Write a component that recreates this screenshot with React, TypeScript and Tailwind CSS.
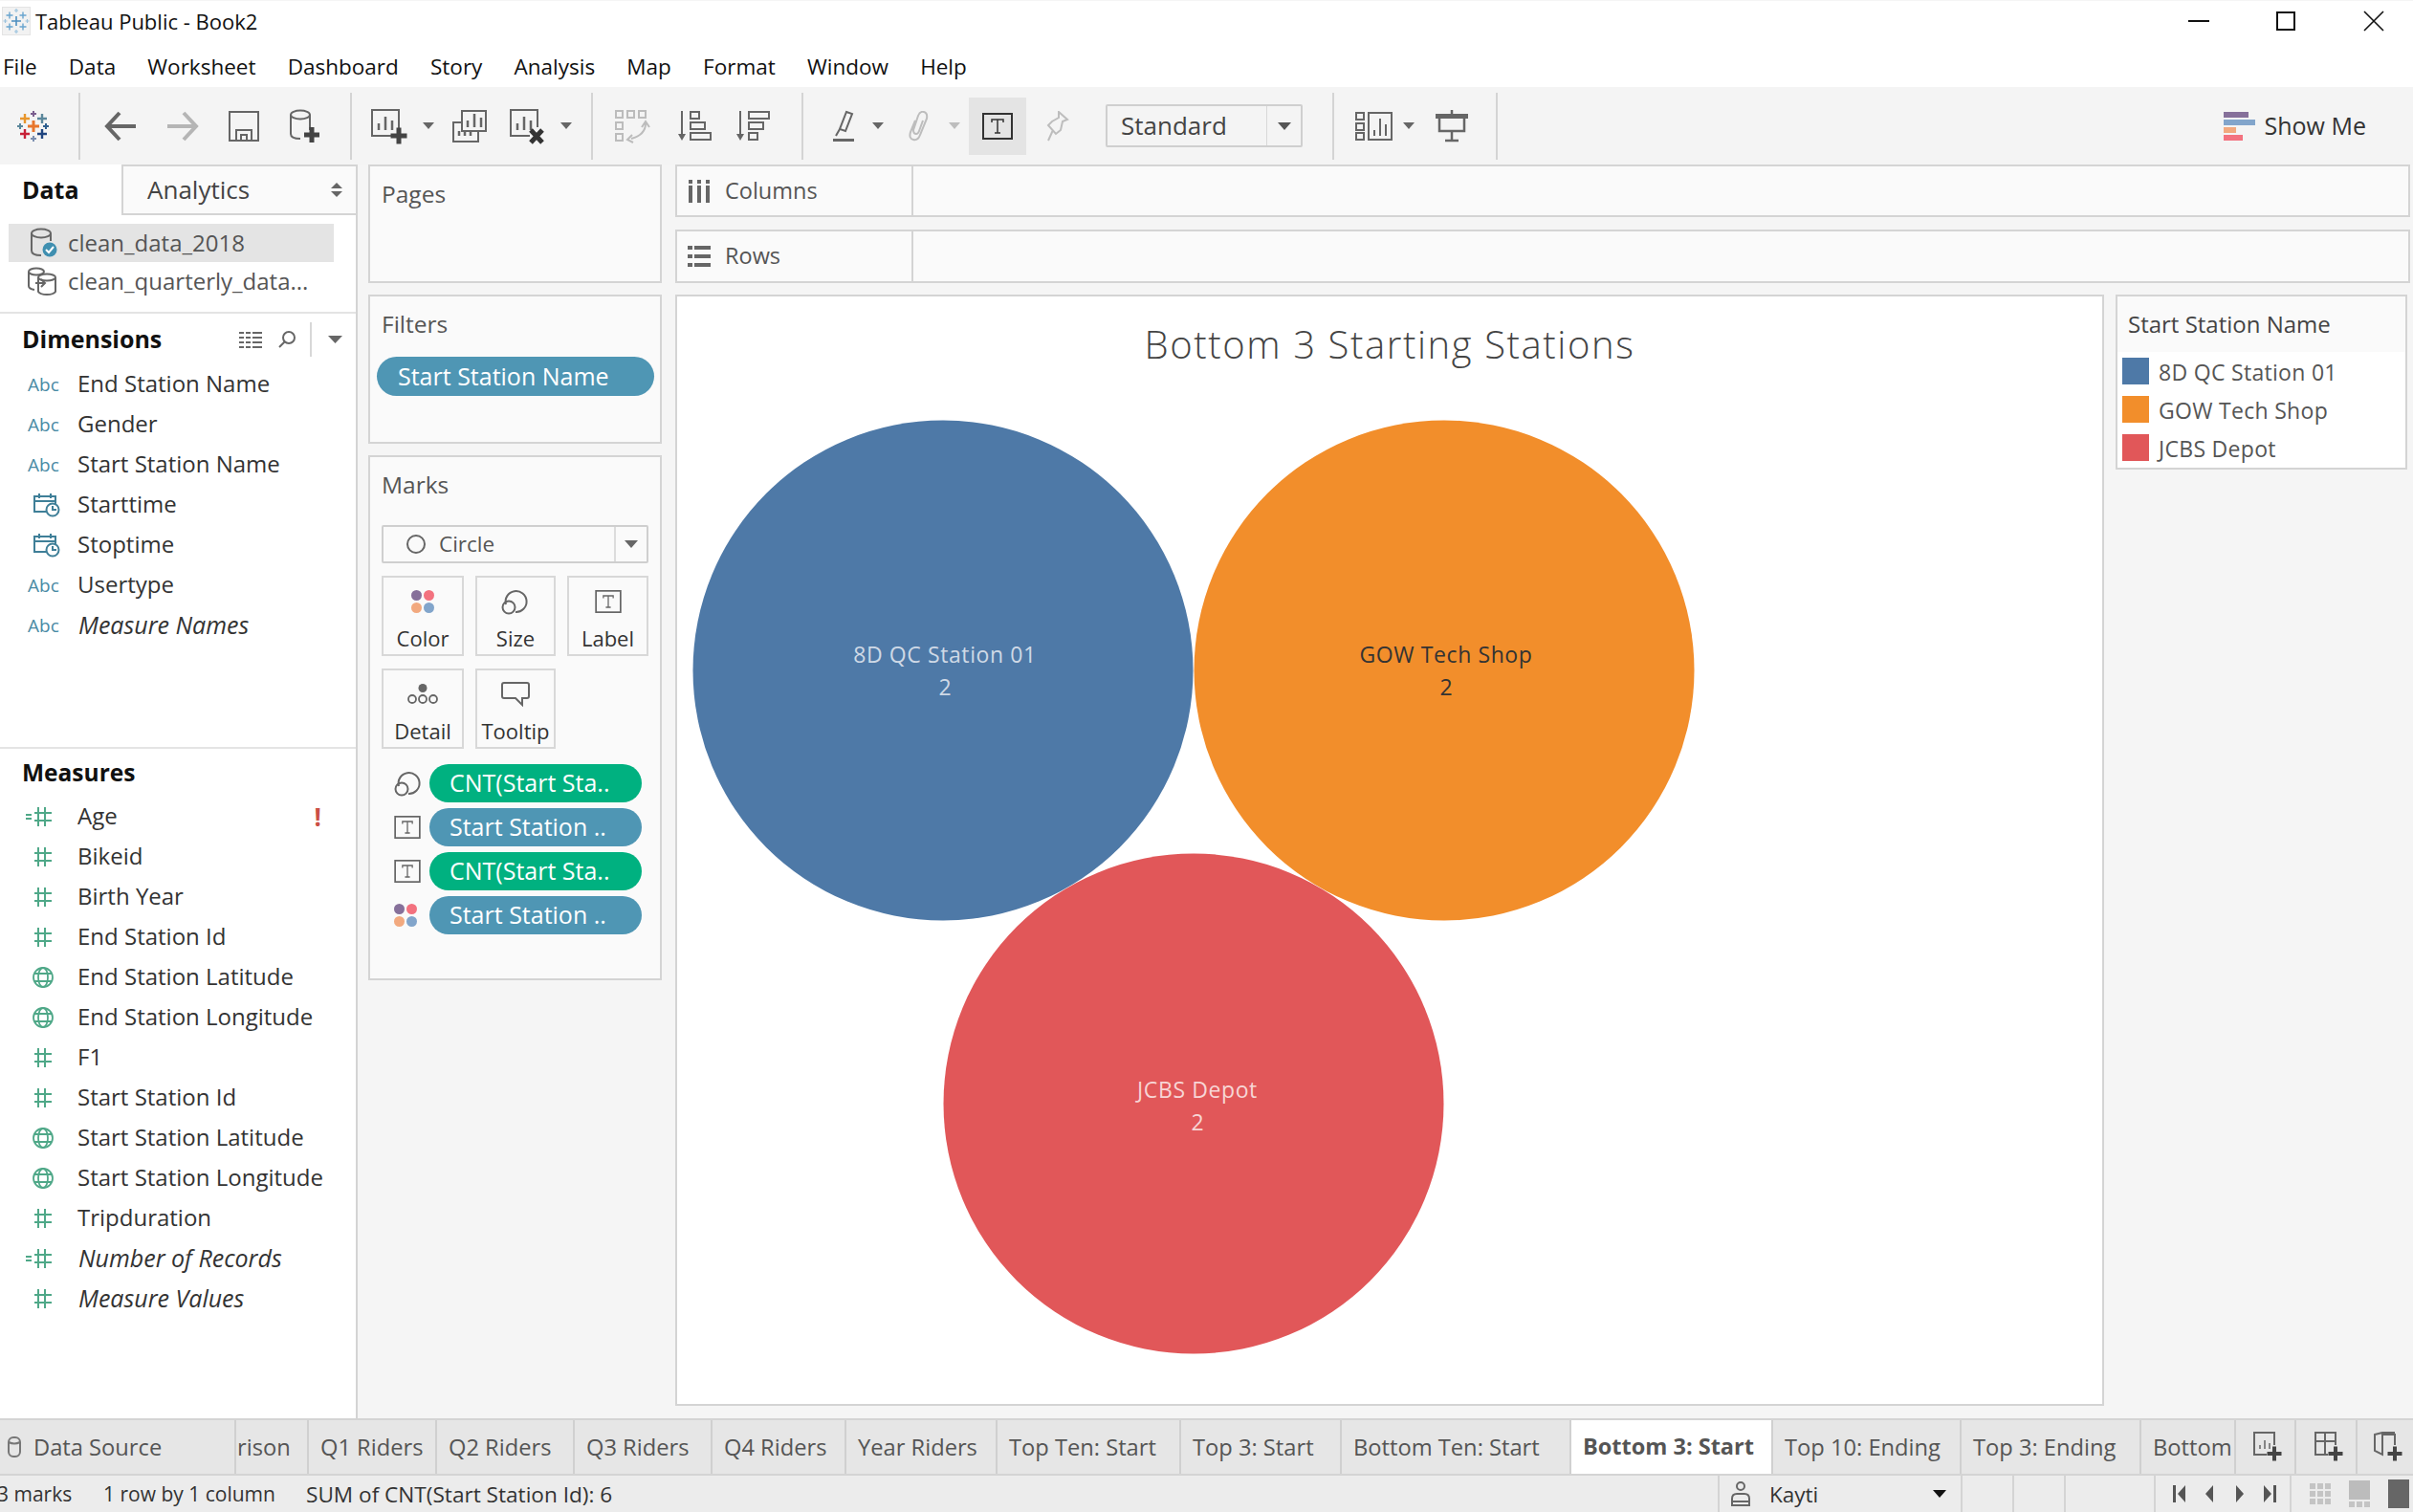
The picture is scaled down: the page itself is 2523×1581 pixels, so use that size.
import React from 'react';

const G = '#666666';

const Tri = ({ color = '#666', w = 12, h = 7 }: { color?: string; w?: number; h?: number }) => (
  <svg width={w} height={h} viewBox="0 0 12 7" preserveAspectRatio="none" className="shrink-0">
    <polygon points="0,0 12,0 6,7" fill={color} />
  </svg>
);

const Plus = ({ x, y, s = 16, w = 5, color = '#444' }: { x: number; y: number; s?: number; w?: number; color?: string }) => (
  <path d={`M${x} ${y - s / 2}V${y + s / 2}M${x - s / 2} ${y}H${x + s / 2}`} stroke={color} strokeWidth={w} fill="none" />
);

const Cross = ({ x, y, s, c, w = 2.4 }: { x: number; y: number; s: number; c: string; w?: number }) => (
  <path d={`M${x} ${y - s}V${y + s}M${x - s} ${y}H${x + s}`} stroke={c} strokeWidth={w} fill="none" />
);

const TableauLogo = () => (
  <svg width="36" height="34" viewBox="0 0 36 34">
    <Cross x={18} y={17} s={6} c="#e8762c" w={3} />
    <Cross x={9} y={9} s={5} c="#e8962c" />
    <Cross x={27} y={9} s={5} c="#5b879b" />
    <Cross x={18} y={4} s={3} c="#7b5f8f" w={2} />
    <Cross x={4} y={17} s={3} c="#5b879b" w={2} />
    <Cross x={31} y={17} s={3} c="#2f5f8f" w={2} />
    <Cross x={9} y={25} s={5} c="#c72037" />
    <Cross x={27} y={25} s={5} c="#1f447f" />
    <Cross x={18} y={30} s={3} c="#7b8fb0" w={2} />
  </svg>
);

const AppIcon = () => (
  <div className="w-[30px] h-[30px] bg-[#f2f2f2] border border-[#e4e4e4] shrink-0 ml-[2px]">
    <svg width="28" height="28" viewBox="0 0 28 28">
      <Cross x={14} y={14} s={5} c="#4e8fc0" w={1.6} />
      <Cross x={7} y={8} s={3.5} c="#6aa5cf" w={1.4} />
      <Cross x={21} y={8} s={3.5} c="#6aa5cf" w={1.4} />
      <Cross x={7} y={20} s={3.5} c="#6aa5cf" w={1.4} />
      <Cross x={21} y={20} s={3.5} c="#6aa5cf" w={1.4} />
      <Cross x={14} y={3} s={2} c="#9cc3de" w={1.2} />
      <Cross x={14} y={25} s={2} c="#9cc3de" w={1.2} />
      <Cross x={2.5} y={14} s={2} c="#9cc3de" w={1.2} />
      <Cross x={25.5} y={14} s={2} c="#9cc3de" w={1.2} />
    </svg>
  </div>
);

const Arrow = ({ flip, color }: { flip?: boolean; color: string }) => (
  <svg width="36" height="32" viewBox="0 0 36 32" className={flip ? '-scale-x-100' : ''}>
    <path d="M34 16H5M17 2L4 16L17 30" stroke={color} strokeWidth="4" fill="none" />
  </svg>
);

const SaveIcon = () => (
  <svg width="32" height="32" viewBox="0 0 32 32" fill="none" stroke={G} strokeWidth="2">
    <rect x="1" y="1" width="30" height="30" />
    <path d="M8 31V20H24V31M13 31V25H19V31" />
  </svg>
);

const AddDataIcon = () => (
  <svg width="34" height="36" viewBox="0 0 34 36" fill="none" stroke={G} strokeWidth="2">
    <ellipse cx="12" cy="6" rx="10" ry="4.5" />
    <path d="M2 6V26Q2 31 12 31M22 6V22" />
    <Plus x={24} y={27} />
  </svg>
);

const Bars = ({ x, y, s = 1 }: { x: number; y: number; s?: number }) => (
  <path
    d={`M${x} ${y}v${-7 * s}M${x + 7 * s} ${y}v${-14 * s}M${x + 14 * s} ${y}v${-10 * s}`}
    stroke={G}
    strokeWidth="2.5"
    fill="none"
  />
);

const NewSheetIcon = () => (
  <svg width="40" height="38" viewBox="0 0 40 38" fill="none" stroke={G} strokeWidth="2">
    <path d="M24 29H2V2H30V22" />
    <Bars x={9} y={23} />
    <Plus x={30} y={29} s={17} />
  </svg>
);

const DuplicateIcon = () => (
  <svg width="38" height="36" viewBox="0 0 38 36" fill="none" stroke={G} strokeWidth="2">
    <rect x="11" y="2" width="25" height="21" />
    <Bars x={17} y={19} />
    <path d="M11 14H2V34H28V23" />
    <path d="M8 28v-5M14 28v-5M20 28v-5" strokeWidth="2.5" />
  </svg>
);

const ClearIcon = () => (
  <svg width="38" height="38" viewBox="0 0 38 38" fill="none" stroke={G} strokeWidth="2">
    <path d="M22 29H2V2H30V20" />
    <Bars x={9} y={23} />
    <path d="M23 23L35 36M35 23L23 36" stroke="#333" strokeWidth="5" />
  </svg>
);

const SwapIcon = () => (
  <svg width="38" height="36" viewBox="0 0 38 36" fill="none" stroke="#bcbcbc" strokeWidth="2">
    <rect x="2" y="2" width="7" height="7" />
    <rect x="14" y="2" width="7" height="7" />
    <rect x="26" y="2" width="7" height="7" />
    <rect x="2" y="14" width="7" height="7" />
    <rect x="2" y="26" width="7" height="7" />
    <path d="M33 15Q33 27 18 31M29 19L33 13L37 19M19 27L14 32L20 35" />
  </svg>
);

const SortIcon = ({ asc }: { asc?: boolean }) => (
  <svg width="36" height="34" viewBox="0 0 36 34" fill="none" stroke={G} strokeWidth="2">
    <path d="M4 1V26" />
    <polygon points="0,25 8,25 4,32" fill={G} stroke="none" />
    {asc ? (
      <>
        <rect x="13" y="2" width="9" height="7" />
        <rect x="13" y="13" width="15" height="7" />
        <rect x="13" y="24" width="21" height="7" />
      </>
    ) : (
      <>
        <rect x="13" y="2" width="21" height="7" />
        <rect x="13" y="13" width="15" height="7" />
        <rect x="13" y="24" width="9" height="7" />
      </>
    )}
  </svg>
);

const HighlightIcon = () => (
  <svg width="24" height="34" viewBox="0 0 24 34" fill="none" stroke={G} strokeWidth="2">
    <path d="M15 2L21 4L14 22L8 20ZM8 20L4 27" />
    <rect x="1" y="30" width="22" height="3" fill={G} stroke="none" />
  </svg>
);

const ClipIcon = () => (
  <svg width="24" height="32" viewBox="0 0 24 32" fill="none" stroke="#bdbdbd" strokeWidth="2">
    <path d="M9 10L4 22Q2 29 7 30Q12 31 14 25L21 8Q22 2 18 1Q14 0 12 5L7 20Q7 24 10 24Q12 24 13 21L17 10" />
  </svg>
);

const TIcon = ({ w = 32, h = 28, color = '#333', sw = 2 }: { w?: number; h?: number; color?: string; sw?: number }) => (
  <svg width={w} height={h} viewBox="0 0 32 28" fill="none">
    <rect x="1" y="1" width="30" height="26" stroke={color} strokeWidth={sw} />
    <path d="M10 10V7H22V10M16 7V21M13 21H19" stroke={color} strokeWidth="1.5" />
  </svg>
);

const PinIcon = () => (
  <svg width="24" height="32" viewBox="0 0 24 32" fill="none" stroke="#bdbdbd" strokeWidth="2">
    <path d="M13 1L22 9L17 11L15 20L10 24L2 15L6 11L13 7ZM7 20L2 31" />
  </svg>
);

const CardsIcon = () => (
  <svg width="40" height="30" viewBox="0 0 40 30" fill="none" stroke={G} strokeWidth="2">
    <rect x="1" y="1" width="8" height="7" />
    <rect x="1" y="12" width="8" height="7" />
    <rect x="1" y="22" width="8" height="7" />
    <rect x="14" y="1" width="24" height="28" />
    <path d="M20 25v-6M26 25v-18M32 25v-12" />
  </svg>
);

const PresentIcon = () => (
  <svg width="34" height="34" viewBox="0 0 34 34" fill="none" stroke={G} strokeWidth="2.5">
    <path d="M17 0V4" />
    <rect x="0" y="4" width="34" height="5" fill={G} stroke="none" />
    <path d="M4 9V22H30V9M17 22V32M10 32H24" />
  </svg>
);

const ShowMeIcon = () => (
  <div className="flex flex-col gap-[2px] w-[33px]">
    <div className="h-[6px] w-[26px] bg-[#86709a]" />
    <div className="h-[6px] w-[33px] bg-[#82a5cb]" />
    <div className="h-[6px] w-[13px] bg-[#f2a97f]" />
    <div className="h-[6px] w-[20px] bg-[#f3727f]" />
  </div>
);

const Sep = () => <div className="w-[2px] h-[70px] bg-[#d4d4d4] shrink-0" />;

const Slot = ({ w = 40, ml = 0, children }: { w?: number; ml?: number; children: React.ReactNode }) => (
  <div className="flex items-center justify-center shrink-0" style={{ width: w, marginLeft: ml }}>
    {children}
  </div>
);

const Toolbar = () => (
  <div className="h-[81px] bg-[#f4f4f4] flex items-center shrink-0">
    <Slot w={70}><TableauLogo /></Slot>
    <div className="ml-[12px]"><Sep /></div>
    <Slot ml={22}><Arrow color="#666" /></Slot>
    <Slot ml={25}><Arrow flip color="#b5b5b5" /></Slot>
    <Slot ml={24}><SaveIcon /></Slot>
    <Slot ml={24}><AddDataIcon /></Slot>
    <div className="ml-[27px]"><Sep /></div>
    <Slot ml={19}><NewSheetIcon /></Slot>
    <Slot w={14} ml={14}><Tri /></Slot>
    <Slot ml={16}><DuplicateIcon /></Slot>
    <Slot ml={20}><ClearIcon /></Slot>
    <Slot w={14} ml={14}><Tri /></Slot>
    <div className="ml-[19px]"><Sep /></div>
    <Slot ml={21}><SwapIcon /></Slot>
    <Slot ml={26}><SortIcon asc /></Slot>
    <Slot ml={21}><SortIcon /></Slot>
    <div className="ml-[30px]"><Sep /></div>
    <Slot ml={22}><HighlightIcon /></Slot>
    <Slot w={14} ml={9}><Tri /></Slot>
    <Slot ml={15}><ClipIcon /></Slot>
    <Slot w={14} ml={11}><Tri color="#bdbdbd" /></Slot>
    <div className="ml-[8px] w-[60px] h-[60px] bg-[#e4e4e4] flex items-center justify-center shrink-0">
      <TIcon />
    </div>
    <Slot ml={13}><PinIcon /></Slot>
    <div className="ml-[30px] w-[206px] h-[45px] border-2 border-[#cfcfcf] rounded-[2px] flex items-center shrink-0">
      <span className="pl-[14px] flex-1 text-[26px] text-[#444]">Standard</span>
      <div className="w-[36px] h-full border-l border-[#d8d8d8] flex items-center justify-center">
        <Tri w={14} h={8} color="#555" />
      </div>
    </div>
    <div className="ml-[31px]"><Sep /></div>
    <Slot ml={22}><CardsIcon /></Slot>
    <Slot w={14} ml={9}><Tri /></Slot>
    <Slot ml={18}><PresentIcon /></Slot>
    <div className="ml-[26px]"><Sep /></div>
    <div className="ml-auto mr-[49px] flex items-center gap-[10px]">
      <ShowMeIcon />
      <span className="text-[25px] text-[#333]">Show Me</span>
    </div>
  </div>
);

const CalendarIcon = () => (
  <svg width="30" height="26" viewBox="0 0 30 26" fill="none" stroke="#3f7f98" strokeWidth="2">
    <path d="M14 20H2V4H24V12M2 9H24M7 1V6M19 1V6" />
    <circle cx="21" cy="18" r="6.5" fill="#fff" />
    <path d="M21 14V18H25" />
  </svg>
);

const NumIcon = ({ eq }: { eq?: boolean }) => (
  <svg width="30" height="20" viewBox="0 0 30 20" fill="none" stroke="#4fa888" strokeWidth="2" className="ml-[-2px]">
    {eq && <path d="M0 8H6M0 12H6" />}
    <path d="M13 0V20M20 0V20M9 6H27M9 14H27" />
  </svg>
);

const GlobeIcon = () => (
  <svg width="22" height="22" viewBox="0 0 22 22" fill="none" stroke="#4fa888" strokeWidth="1.8">
    <circle cx="11" cy="11" r="10" />
    <ellipse cx="11" cy="11" rx="5" ry="10" />
    <path d="M2 7H20M2 15H20" />
  </svg>
);

const AbcIcon = () => <span className="text-[19px] leading-none text-[#4a8ba5]">Abc</span>;

type FieldKind = 'abc' | 'date' | 'num' | 'eq' | 'geo';

const FieldIcon = ({ kind }: { kind: FieldKind }) => {
  if (kind === 'abc') return <AbcIcon />;
  if (kind === 'date') return <div className="pl-[5px]"><CalendarIcon /></div>;
  if (kind === 'geo') return <div className="pl-[5px]"><GlobeIcon /></div>;
  return <NumIcon eq={kind === 'eq'} />;
};

const Field = ({ kind, name, italic, warn }: { kind: FieldKind; name: string; italic?: boolean; warn?: boolean }) => (
  <div className="h-[42px] flex items-center">
    <div className="w-[81px] pl-[29px] flex items-center shrink-0">
      <FieldIcon kind={kind} />
    </div>
    <span className={`leading-none text-[#333] whitespace-nowrap mt-[-2px] ${italic ? 'italic text-[25px] ml-[1px]' : 'text-[24px]'}`}>{name}</span>
    {warn && <span className="ml-auto mr-[36px] text-[26px] font-bold leading-none text-[#cb4f45]">!</span>}
  </div>
);

const dimensions: [FieldKind, string, boolean?][] = [
  ['abc', 'End Station Name'],
  ['abc', 'Gender'],
  ['abc', 'Start Station Name'],
  ['date', 'Starttime'],
  ['date', 'Stoptime'],
  ['abc', 'Usertype'],
  ['abc', 'Measure Names', true],
];

const measures: [FieldKind, string, boolean?][] = [
  ['eq', 'Age'],
  ['num', 'Bikeid'],
  ['num', 'Birth Year'],
  ['num', 'End Station Id'],
  ['geo', 'End Station Latitude'],
  ['geo', 'End Station Longitude'],
  ['num', 'F1'],
  ['num', 'Start Station Id'],
  ['geo', 'Start Station Latitude'],
  ['geo', 'Start Station Longitude'],
  ['num', 'Tripduration'],
  ['eq', 'Number of Records', true],
  ['num', 'Measure Values', true],
];

const DataPane = () => (
  <div className="w-[374px] shrink-0 bg-white border-r-2 border-[#d4d4d4] flex flex-col">
    <div className="h-[53px] flex shrink-0">
      <div className="w-[127px] pl-[23px] flex items-center text-[25px] font-bold text-[#111]">Data</div>
      <div className="flex-1 bg-[#fafafa] border-2 border-r-0 border-[#d4d4d4] pl-[25px] pr-[14px] flex items-center justify-between">
        <span className="text-[26px] text-[#444]">Analytics</span>
        <svg width="12" height="15" viewBox="0 0 12 15"><polygon points="6,0 12,6 0,6" fill="#666" /><polygon points="6,15 12,9 0,9" fill="#666" /></svg>
      </div>
    </div>
    <div className="mt-[9px] h-[40px] ml-[9px] w-[340px] bg-[#e4e4e4] flex items-center shrink-0">
      <svg width="30" height="32" viewBox="0 0 30 32" fill="none" stroke={G} strokeWidth="2" className="ml-[22px]">
        <ellipse cx="12" cy="6" rx="10" ry="4.5" />
        <path d="M2 6V24Q2 29 12 29M22 6V14" />
        <circle cx="21" cy="23" r="7.5" fill="#3f8fb0" stroke="none" />
        <path d="M17 23L20 26L25 20" stroke="#fff" />
      </svg>
      <span className="ml-[10px] text-[24px] text-[#555]">clean_data_2018</span>
    </div>
    <div className="h-[40px] flex items-center shrink-0">
      <svg width="32" height="30" viewBox="0 0 32 30" fill="none" stroke={G} strokeWidth="2" className="ml-[28px]">
        <ellipse cx="10" cy="5" rx="8" ry="3.5" />
        <path d="M2 5V20Q2 23 8 24" />
        <ellipse cx="21" cy="11" rx="9" ry="3.5" />
        <path d="M12 11V26Q14 29 21 29Q28 29 30 26V11M9 17H19M15 13L19 17L15 21" />
      </svg>
      <span className="ml-[11px] text-[24px] text-[#555] whitespace-nowrap">clean_quarterly_data...</span>
    </div>
    <div className="mt-[12px] h-[2px] bg-[#e4e4e4] shrink-0" />
    <div className="h-[53px] flex items-center pl-[23px] shrink-0">
      <span className="text-[25px] font-bold text-[#111]">Dimensions</span>
      <svg width="24" height="18" viewBox="0 0 24 18" stroke="#666" strokeWidth="2" className="ml-[auto]">
        <path d="M0 2h5M7 2h5M14 2h10M0 7h5M7 7h5M14 7h10M0 12h5M7 12h5M14 12h10M0 17h5M7 17h5M14 17h10" />
      </svg>
      <svg width="18" height="18" viewBox="0 0 18 18" fill="none" stroke="#666" strokeWidth="2" className="ml-[17px]">
        <circle cx="11" cy="7" r="6" />
        <path d="M7 11L1 17" />
      </svg>
      <div className="ml-[15px] w-[2px] h-[36px] bg-[#d8d8d8]" />
      <div className="ml-[17px] mr-[14px]"><Tri w={15} h={8} /></div>
    </div>
    <div className="flex flex-col shrink-0">
      {dimensions.map(([kind, name, italic]) => (
        <Field key={name} kind={kind} name={name} italic={italic} />
      ))}
    </div>
    <div className="mt-[106px] h-[2px] bg-[#e4e4e4] shrink-0" />
    <div className="h-[50px] flex items-center pl-[23px] shrink-0">
      <span className="text-[24.5px] font-bold text-[#111]">Measures</span>
    </div>
    <div className="flex flex-col">
      {measures.map(([kind, name, italic], i) => (
        <Field key={name} kind={kind} name={name} italic={italic} warn={i === 0} />
      ))}
    </div>
  </div>
);

const ColorDots = ({ size = 11 }: { size?: number }) => (
  <div className="grid grid-cols-2 gap-[2px]" style={{ width: size * 2 + 2 }}>
    {['#86709a', '#f3727f', '#f2a97f', '#82a5cb'].map((c) => (
      <div key={c} className="rounded-full" style={{ width: size, height: size, backgroundColor: c }} />
    ))}
  </div>
);

const SizeIcon = () => (
  <svg width="30" height="28" viewBox="0 0 30 28" fill="none" stroke={G} strokeWidth="2">
    <path d="M5 17A11 11 0 1 1 15 25" />
    <circle cx="8" cy="20" r="6.5" />
  </svg>
);

const DetailIcon = () => (
  <svg width="32" height="22" viewBox="0 0 32 22" fill="none" stroke={G} strokeWidth="1.8">
    <circle cx="16" cy="4.5" r="4.5" fill={G} stroke="none" />
    <circle cx="5" cy="16" r="4" />
    <circle cx="16" cy="16" r="4" />
    <circle cx="27" cy="16" r="4" />
  </svg>
);

const TooltipIcon = () => (
  <svg width="30" height="26" viewBox="0 0 30 26" fill="none" stroke={G} strokeWidth="2">
    <path d="M3 1H27Q29 1 29 3V15Q29 17 27 17H22V24L15 17H3Q1 17 1 15V3Q1 1 3 1Z" />
  </svg>
);

const MarkCard = ({ label, children }: { label: string; children: React.ReactNode }) => (
  <div className="h-[84px] border-2 border-[#d8d8d8] flex flex-col items-center">
    <div className="h-[50px] flex items-center justify-center">{children}</div>
    <span className="text-[22px] leading-none mt-[2px] text-[#333] whitespace-nowrap">{label}</span>
  </div>
);

const Pill = ({ text, green }: { text: string; green?: boolean }) => (
  <div className={`h-[40px] w-[222px] rounded-full flex items-center pl-[21px] text-[25px] text-white whitespace-nowrap ${green ? 'bg-[#00b180]' : 'bg-[#4f96b4]'}`}>
    {text}
  </div>
);

const MarkRow = ({ icon, text, green }: { icon: React.ReactNode; text: string; green?: boolean }) => (
  <div className="flex items-center">
    <div className="w-[50px] pl-[13px] flex items-center">{icon}</div>
    <Pill text={text} green={green} />
  </div>
);

const SideCard = ({ title, h, children }: { title: string; h: string; children?: React.ReactNode }) => (
  <div className={`${h} bg-[#fafafa] border-2 border-[#d4d4d4] shrink-0`}>
    <div className="pl-[12px] pt-[14px] pb-[1px] text-[24.5px] leading-[30px] text-[#555]">{title}</div>
    {children}
  </div>
);

const ShelvesColumn = () => (
  <div className="w-[307px] ml-[11px] flex flex-col gap-[12px] shrink-0">
    <SideCard title="Pages" h="h-[124px]" />
    <SideCard title="Filters" h="h-[156px]">
      <div className="mt-[18px] ml-[7px] h-[41px] w-[290px] rounded-full bg-[#4f96b4] flex items-center pl-[22px] text-[25px] text-white">
        Start Station Name
      </div>
    </SideCard>
    <SideCard title="Marks" h="h-[549px]">
      <div className="mt-[26px] ml-[12px] w-[279px] h-[40px] border-2 border-[#cfcfcf] rounded-[2px] flex items-center">
        <div className="ml-[24px] w-[20px] h-[20px] rounded-full border-2 border-[#666]" />
        <span className="ml-[14px] flex-1 text-[22.5px] text-[#555]">Circle</span>
        <div className="w-[34px] h-full border-l-2 border-[#dcdcdc] flex items-center justify-center">
          <Tri w={14} h={8} />
        </div>
      </div>
      <div className="mt-[13px] ml-[12px] w-[279px] grid grid-cols-[86px_84px_85px] gap-x-[12px] gap-y-[13px]">
        <MarkCard label="Color"><ColorDots /></MarkCard>
        <MarkCard label="Size"><SizeIcon /></MarkCard>
        <MarkCard label="Label"><TIcon w={28} h={24} color="#666" /></MarkCard>
        <MarkCard label="Detail"><DetailIcon /></MarkCard>
        <MarkCard label="Tooltip"><TooltipIcon /></MarkCard>
      </div>
      <div className="mt-[16px] ml-[12px] flex flex-col gap-[6px]">
        <MarkRow icon={<SizeIcon />} text="CNT(Start Sta.." green />
        <MarkRow icon={<TIcon w={28} h={24} color="#666" />} text="Start Station .." />
        <MarkRow icon={<TIcon w={28} h={24} color="#666" />} text="CNT(Start Sta.." green />
        <MarkRow icon={<ColorDots />} text="Start Station .." />
      </div>
    </SideCard>
  </div>
);

const Shelf = ({ label, h, icon }: { label: string; h: string; icon: React.ReactNode }) => (
  <div className={`${h} bg-[#fafafa] border-2 border-[#d4d4d4] flex shrink-0`}>
    <div className="w-[247px] border-r-2 border-[#d4d4d4] flex items-center">
      <div className="w-[24px] ml-[11px] flex justify-center">{icon}</div>
      <span className="ml-[15px] text-[23.5px] text-[#555]">{label}</span>
    </div>
  </div>
);

const ColumnsIcon = () => (
  <svg width="22" height="24" viewBox="0 0 22 24" fill="#666">
    <path d="M0 0h4v4H0zM0 6h4v18H0zM9 0h4v4H9zM9 6h4v18H9zM18 0h4v4h-4zM18 6h4v18h-4z" />
  </svg>
);

const RowsIcon = () => (
  <svg width="24" height="22" viewBox="0 0 24 22" fill="#666">
    <path d="M0 0h5v4H0zM7 0h17v4H7zM0 9h5v4H0zM7 9h17v4H7zM0 18h5v4H0zM7 18h17v4H7z" />
  </svg>
);

const chartMarks = [
  { cx: 278, cy: 291, fill: '#4e79a7', text: '#cfd9e6', lx: 280, ly: 283, name: '8D QC Station 01' },
  { cx: 802, cy: 291, fill: '#f28e2b', text: '#333333', lx: 804, ly: 283, name: 'GOW Tech Shop' },
  { cx: 540, cy: 744, fill: '#e15759', text: '#f7d5d5', lx: 544, ly: 738, name: 'JCBS Depot' },
];

const Chart = () => (
  <svg width="1490" height="1058" viewBox="0 0 1490 1058">
    {chartMarks.map((m) => (
      <g key={m.name}>
        <circle cx={m.cx} cy={m.cy} r="261.5" fill={m.fill} />
        <text x={m.lx} y={m.ly} textAnchor="middle" fontSize="23" letterSpacing="0.6" fill={m.text}>{m.name}</text>
        <text x={m.lx} y={m.ly + 34} textAnchor="middle" fontSize="23" fill={m.text}>2</text>
      </g>
    ))}
  </svg>
);

const legend = [
  { c: 'bg-[#4e79a7]', t: '8D QC Station 01' },
  { c: 'bg-[#f28e2b]', t: 'GOW Tech Shop' },
  { c: 'bg-[#e15759]', t: 'JCBS Depot' },
];

const Legend = () => (
  <div className="w-[305px] h-[183px] bg-white border-2 border-[#d4d4d4] shrink-0">
    <div className="h-[58px] bg-[#fafafa] pl-[11px] flex items-center text-[24px] text-[#444]">Start Station Name</div>
    <div className="pt-[6px] pl-[5px] flex flex-col gap-[12px]">
      {legend.map((l) => (
        <div key={l.t} className="h-[28px] flex items-center">
          <div className={`w-[28px] h-[28px] ${l.c}`} />
          <span className="ml-[10px] text-[23px] tracking-[0.3px] mt-[2px] text-[#555]">{l.t}</span>
        </div>
      ))}
    </div>
  </div>
);

const ViewArea = () => (
  <div className="flex-1 ml-[14px] mr-[3px] flex flex-col min-w-0">
    <Shelf label="Columns" h="h-[55px]" icon={<ColumnsIcon />} />
    <div className="mt-[13px]"><Shelf label="Rows" h="h-[56px]" icon={<RowsIcon />} /></div>
    <div className="mt-[12px] flex gap-[12px] h-[1162px]">
      <div className="w-[1494px] bg-white border-2 border-[#d4d4d4] flex flex-col overflow-hidden shrink-0">
        <div className="h-[100px] flex items-center justify-center text-[40px] tracking-[1.6px] font-light text-[#444]">
          Bottom 3 Starting Stations
        </div>
        <Chart />
      </div>
      <Legend />
    </div>
  </div>
);

const tabs: { w: string; t: string; active?: boolean }[] = [
  { w: 'w-[134px]', t: 'Q1 Riders' },
  { w: 'w-[144px]', t: 'Q2 Riders' },
  { w: 'w-[144px]', t: 'Q3 Riders' },
  { w: 'w-[140px]', t: 'Q4 Riders' },
  { w: 'w-[158px]', t: 'Year Riders' },
  { w: 'w-[192px]', t: 'Top Ten: Start' },
  { w: 'w-[168px]', t: 'Top 3: Start' },
  { w: 'w-[240px]', t: 'Bottom Ten: Start' },
  { w: 'w-[211px]', t: 'Bottom 3: Start', active: true },
  { w: 'w-[197px]', t: 'Top 10: Ending' },
  { w: 'w-[188px]', t: 'Top 3: Ending' },
  { w: 'w-[99px]', t: 'Bottom' },
];

const TabAddIcon = ({ kind }: { kind: 'sheet' | 'dash' | 'story' }) => (
  <svg width="30" height="32" viewBox="0 0 30 32" fill="none" stroke={G} strokeWidth="2">
    {kind === 'sheet' && (
      <>
        <path d="M14 24H1V1H22V14" />
        <path d="M7 18v-4M12 18v-9M17 18v-6" strokeWidth="1.5" />
      </>
    )}
    {kind === 'dash' && <path d="M14 24H1V1H22V14M1 10H22M11 1V24" />}
    {kind === 'story' && <path d="M1 3L9 1V24L1 20ZM9 3H22L22 14M9 1L22 1" />}
    <Plus x={22} y={23} s={15} w={4} />
  </svg>
);

const TabBar = () => (
  <div className="h-[60px] bg-[#e6e6e6] border-t-2 border-b-2 border-[#d4d4d4] flex shrink-0 overflow-hidden">
    <div className="w-[247px] flex items-center border-r-2 border-[#d0d0d0] shrink-0">
      <svg width="14" height="22" viewBox="0 0 14 22" fill="none" stroke="#777" strokeWidth="2" className="ml-[8px]">
        <rect x="1" y="1" width="12" height="20" rx="5" />
        <path d="M1 6Q7 9 13 6" />
      </svg>
      <span className="ml-[13px] text-[23.7px] text-[#555] mt-[1px]">Data Source</span>
    </div>
    <div className="w-[76px] flex items-center pl-[1px] border-r-2 border-[#d0d0d0] shrink-0 text-[23.7px] text-[#555] pt-[1px]">rison</div>
    {tabs.map((tab) => (
      <div
        key={tab.t}
        className={`${tab.w} shrink-0 flex items-center pl-[12px] border-r-2 border-[#d0d0d0] overflow-hidden whitespace-nowrap text-[#555] ${tab.active ? 'bg-white font-bold text-[23.5px]' : 'text-[23.7px] pt-[1px]'}`}
      >
        {tab.t}
      </div>
    ))}
    <div className="w-[63px] flex items-center justify-center pl-[5px] border-r-2 border-[#d0d0d0] shrink-0"><TabAddIcon kind="sheet" /></div>
    <div className="w-[64px] flex items-center justify-center pl-[5px] border-r-2 border-[#d0d0d0] shrink-0"><TabAddIcon kind="dash" /></div>
    <div className="w-[58px] flex items-center justify-center pl-[5px] shrink-0"><TabAddIcon kind="story" /></div>
  </div>
);

const Nav = ({ d, last }: { d: 'first' | 'prev' | 'next' | 'last'; last?: boolean }) => (
  <svg width="14" height="18" viewBox="0 0 14 18" fill="#555" className={last ? '' : 'mr-[18px]'}>
    {d === 'first' && <path d="M1 0H4V18H1ZM14 0V18L6 9Z" />}
    {d === 'prev' && <path d="M11 0V18L3 9Z" />}
    {d === 'next' && <path d="M3 0V18L11 9Z" />}
    {d === 'last' && <path d="M13 0H10V18H13ZM0 0V18L8 9Z" />}
  </svg>
);

const StatusBar = () => (
  <div className="h-[38px] bg-[#ececec] flex items-center text-[#333] shrink-0 overflow-hidden">
    <div className="w-[1798px] h-full flex items-center pt-[1px] border-r-2 border-[#d4d4d4] shrink-0 overflow-hidden whitespace-nowrap">
      <span className="w-[108px] shrink-0 text-[21px] ml-[-3px]">3 marks</span>
      <span className="w-[215px] shrink-0 text-[21px] ml-[3px]">1 row by 1 column</span>
      <span className="text-[22.6px] ml-[-3px]">SUM of CNT(Start Station Id): 6</span>
    </div>
    <div className="w-[254px] h-full flex items-center border-r-2 border-[#d4d4d4] shrink-0">
      <svg width="22" height="26" viewBox="0 0 22 26" fill="none" stroke={G} strokeWidth="2" className="ml-[11px]">
        <circle cx="11" cy="5" r="4" />
        <path d="M2 25V18Q2 13 7 13H15Q20 13 20 18V25ZM2 21H20" />
      </svg>
      <span className="ml-[19px] flex-1 text-[22.5px] pt-[1px]">Kayti</span>
      <div className="mr-[15px]"><Tri w={14} h={8} color="#111" /></div>
    </div>
    <div className="w-[54px] h-full border-r-2 border-[#d4d4d4] shrink-0" />
    <div className="w-[54px] h-full border-r-2 border-[#d4d4d4] shrink-0" />
    <div className="w-[94px] h-full border-r-2 border-[#d4d4d4] shrink-0" />
    <div className="w-[142px] h-full flex items-center pl-[17px] border-r-2 border-[#d4d4d4] shrink-0">
      <Nav d="first" />
      <Nav d="prev" />
      <Nav d="next" />
      <Nav d="last" last />
    </div>
    <div className="flex items-center pl-[19px] gap-[19px]">
      <div className="grid grid-cols-3 gap-[2px] w-[22px]">
        {[0, 1, 2, 3, 4, 5, 6, 7, 8].map((n) => <div key={n} className="h-[6px] bg-[#c4c4c4]" />)}
      </div>
      <div className="w-[22px] flex flex-col gap-[2px]">
        <div className="h-[20px] bg-[#bcbcbc]" />
        <div className="grid grid-cols-3 gap-[2px]">
          {[0, 1, 2].map((n) => <div key={n} className="h-[6px] bg-[#c4c4c4]" />)}
        </div>
      </div>
      <div className="w-[22px] h-[30px] bg-[#666]" />
    </div>
  </div>
);

const menuItems = ['File', 'Data', 'Worksheet', 'Dashboard', 'Story', 'Analysis', 'Map', 'Format', 'Window', 'Help'];

export default function App() {
  return (
    <div className="w-[2523px] h-[1581px] flex flex-col bg-[#f5f5f5] overflow-hidden font-['Open_Sans',sans-serif]">
      <div className="h-[42px] mt-[1px] bg-white flex items-center shrink-0">
        <AppIcon />
        <span className="ml-[5px] text-[22px] text-[#111]">Tableau Public - Book2</span>
        <div className="ml-auto flex items-center">
          <div className="w-[22px] h-[2px] bg-[#111]" />
          <div className="ml-[70px] w-[20px] h-[20px] border-2 border-[#111]" />
          <svg width="22" height="22" viewBox="0 0 22 22" stroke="#111" strokeWidth="1.6" className="ml-[71px] mr-[30px]">
            <path d="M1 1L21 21M21 1L1 21" />
          </svg>
        </div>
      </div>
      <div className="h-[48px] bg-white flex items-center pl-[3px] pt-[5px] gap-[33.2px] text-[22.5px] text-[#111] shrink-0">
        {menuItems.map((m) => (
          <span key={m}>{m}</span>
        ))}
      </div>
      <Toolbar />
      <div className="flex-1 flex min-h-0">
        <DataPane />
        <ShelvesColumn />
        <ViewArea />
      </div>
      <TabBar />
      <StatusBar />
    </div>
  );
}
